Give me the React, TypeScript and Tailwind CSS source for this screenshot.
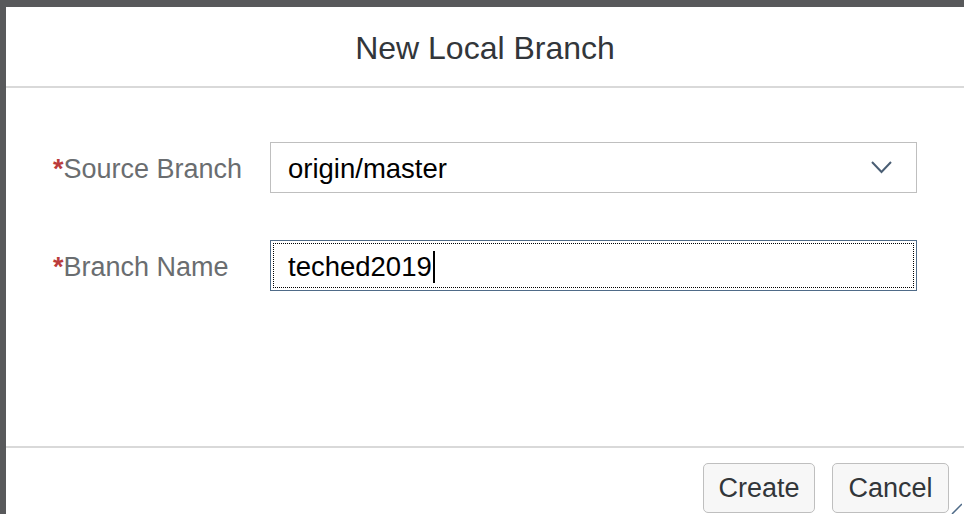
const font = { fontFamily: '"Liberation Sans", Arial, sans-serif' };

function FieldLabel({ text }: { text: string }) {
  return (
    <label className="text-[27px] text-[#6a6d70] leading-none whitespace-nowrap pt-[4px]">
      <span className="text-[#bb3b3b] font-bold">*</span>
      {text}
    </label>
  );
}

function Chevron() {
  return (
    <svg className="w-[21px] h-[13px]" viewBox="0 0 21 13" fill="none">
      <polyline points="1,1 10.5,11 20,1" stroke="#4a5e74" strokeWidth="2" />
    </svg>
  );
}

export default function App() {
  return (
    <div
      className="w-[964px] h-[514px] bg-[#58595b] pt-[7px] pl-[6px] overflow-hidden"
      style={font}
    >
      <div className="flex flex-col h-full bg-white">
        <div className="h-[81px] shrink-0 flex items-center justify-center border-b-2 border-[#d9d9d9]">
          <h1 className="text-[32px] text-[#32363a] leading-none pt-[3px]">
            New Local Branch
          </h1>
        </div>

        <div className="flex-1 pl-[47px] pr-[47px] pt-[54px]">
          <div className="grid grid-cols-[217px_1fr] gap-y-[47px] items-center">
            <FieldLabel text="Source Branch" />
            <div className="h-[51px] border border-[#bfbfbf] flex items-center justify-between pl-[17px] pr-[24px]">
              <span className="text-[27.5px] text-black leading-none pt-[3px]">origin/master</span>
              <Chevron />
            </div>

            <FieldLabel text="Branch Name" />
            <div className="h-[51px] border border-[#4f6b88] p-[2px]">
              <div className="h-full border border-dotted border-black flex items-center pl-[14px]">
                <span className="text-[27.5px] text-black leading-none pt-[3px]">teched2019</span>
                <span className="w-[2px] h-[32px] bg-black ml-[1px] mt-[3px]" />
              </div>
            </div>
          </div>
        </div>

        <div className="h-[68px] shrink-0 border-t-2 border-[#d9d9d9] flex justify-end gap-[17px] pt-[15px] pr-[15px] relative">
          <button className="w-[112px] h-[50px] rounded-[5px] border border-[#bfbfbf] bg-[#f7f7f7] text-[27px] text-[#32363a] leading-none">
            Create
          </button>
          <button className="w-[117px] h-[50px] rounded-[5px] border border-[#bfbfbf] bg-[#f7f7f7] text-[27px] text-[#32363a] leading-none">
            Cancel
          </button>
          <svg className="absolute right-[2px] bottom-0 w-[12px] h-[12px]" viewBox="0 0 12 12">
            <line x1="2" y1="12" x2="12" y2="2" stroke="#4f6b88" strokeWidth="1.5" />
          </svg>
        </div>
      </div>
    </div>
  );
}
